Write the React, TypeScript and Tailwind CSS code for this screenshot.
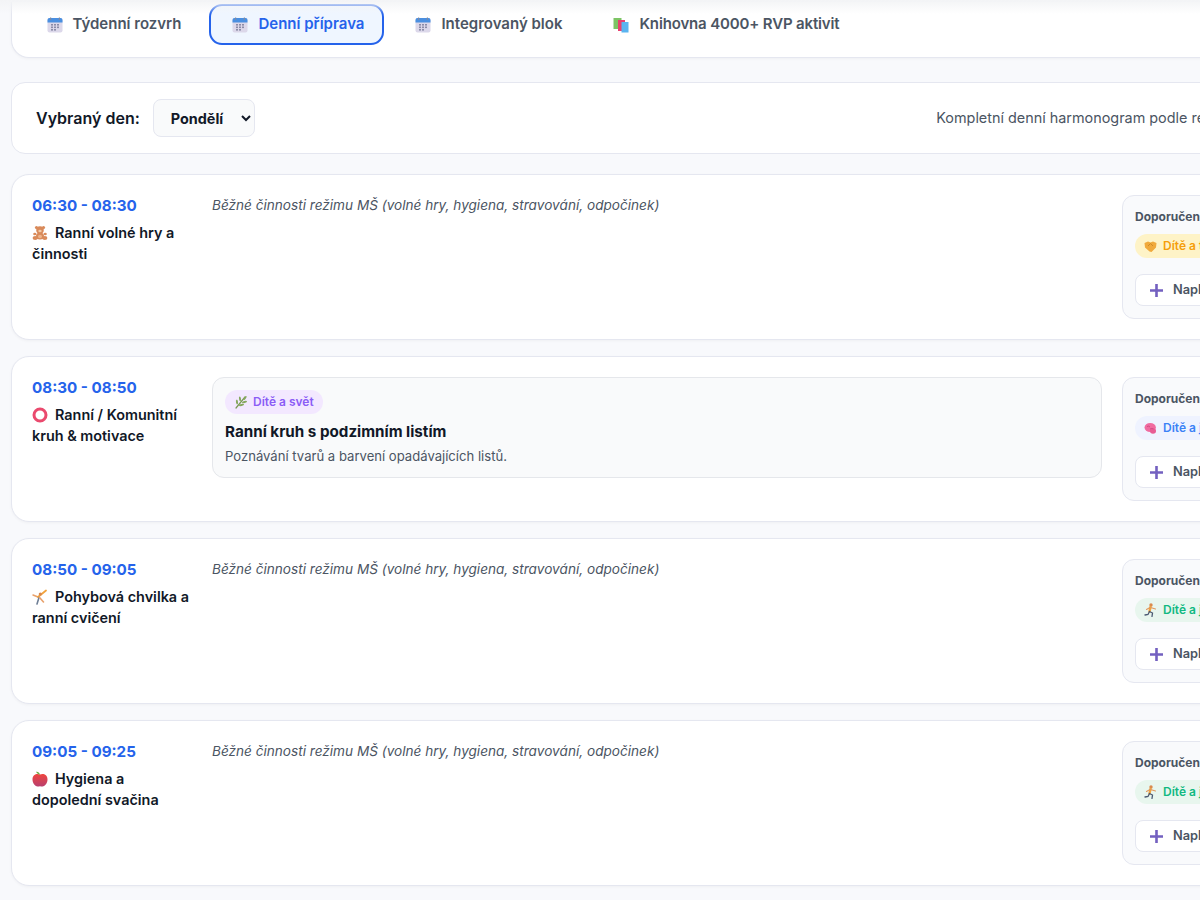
const CalendarIcon = () => (
  <svg width="16" height="16" viewBox="0 0 16 16" className="shrink-0">
    <rect x="0.5" y="1" width="15" height="14.5" rx="2" fill="#dcd8ea" />
    <path d="M.5 3a2 2 0 0 1 2-2h11a2 2 0 0 1 2 2v2.5H.5z" fill="#4a8fe0" />
    <rect x="3" y="0.5" width="1.2" height="2.5" fill="#7c8aa5" />
    <rect x="11.8" y="0.5" width="1.2" height="2.5" fill="#7c8aa5" />
    <g fill="#8b8ca8">
      <rect x="4" y="7" width="2" height="1.6" />
      <rect x="7" y="7" width="2" height="1.6" />
      <rect x="10" y="7" width="2" height="1.6" />
      <rect x="4" y="9.5" width="2" height="1.6" />
      <rect x="7" y="9.5" width="2" height="1.6" />
      <rect x="10" y="9.5" width="2" height="1.6" />
      <rect x="4" y="12" width="2" height="1.6" />
      <rect x="7" y="12" width="2" height="1.6" />
    </g>
  </svg>
);

const BooksIcon = () => (
  <svg width="16" height="16" viewBox="0 0 16 16" className="shrink-0">
    <rect x="0.5" y="1" width="8" height="11" fill="#7cc464" />
    <rect x="5" y="3" width="7" height="11" fill="#e8416f" />
    <rect x="8.5" y="5" width="7" height="10.5" fill="#5ab4f0" />
  </svg>
);

const TeddyIcon = () => (
  <svg width="16" height="16" viewBox="0 0 16 16" className="shrink-0">
    <g fill="#d98a5a">
      <circle cx="4.5" cy="2.5" r="1.6" />
      <circle cx="11.5" cy="2.5" r="1.6" />
      <circle cx="8" cy="5" r="3.8" />
      <ellipse cx="8" cy="11" rx="4" ry="3.6" />
      <ellipse cx="3.2" cy="13" rx="2.6" ry="2" />
      <ellipse cx="12.8" cy="13" rx="2.6" ry="2" />
      <ellipse cx="2.8" cy="9" rx="1.6" ry="1.3" />
      <ellipse cx="13.2" cy="9" rx="1.6" ry="1.3" />
    </g>
    <ellipse cx="8" cy="6" rx="1.7" ry="1.2" fill="#f2c9a4" />
    <ellipse cx="8" cy="11.5" rx="2" ry="1.8" fill="#eeb48a" />
  </svg>
);

const RingIcon = () => (
  <svg width="16" height="16" viewBox="0 0 16 16" className="shrink-0">
    <circle cx="8" cy="8" r="6" fill="none" stroke="#ea4a6e" strokeWidth="3" />
  </svg>
);

const CartwheelIcon = () => (
  <svg width="16" height="16" viewBox="0 0 16 16" className="shrink-0">
    <path d="M1 6 6 8" stroke="#e8a06a" strokeWidth="1.5" strokeLinecap="round" />
    <path d="M6 8 14 1.5" stroke="#f2a33c" strokeWidth="1.8" strokeLinecap="round" />
    <path d="M7 8.5 5 15" stroke="#6f7f96" strokeWidth="1.6" strokeLinecap="round" />
    <path d="M7.5 8.5 11.5 13" stroke="#e8a06a" strokeWidth="1.6" strokeLinecap="round" />
    <circle cx="8.3" cy="5" r="1.6" fill="#d9874f" />
  </svg>
);

const AppleIcon = () => (
  <svg width="16" height="16" viewBox="0 0 16 16" className="shrink-0">
    <defs>
      <linearGradient id="appleFill" x1="0" y1="0" x2="0" y2="1">
        <stop offset="0" stopColor="#f0453e" />
        <stop offset="1" stopColor="#b8406f" />
      </linearGradient>
    </defs>
    <path d="M8 3.5C10.500 2.300 15.500 2.800 15.500 8.500 15.500 12.500 12.500 15.500 10.500 15.500 9.500 15.500 8.800 15.200 8 15.200 7.200 15.200 6.500 15.500 5.500 15.500 3.500 15.500.5 12.500.5 8.500.5 2.800 5.500 2.300 8 3.500z" fill="url(#appleFill)" />
    <path d="M8 3.800C6.500 3.500 5 2.500 4 .8 6 .3 7.800 1.800 8 3.800z" fill="#6aa83f" />
  </svg>
);

const HerbIcon = () => (
  <svg width="14" height="14" viewBox="0 0 14 14" className="shrink-0">
    <path d="M2 13 11 2" stroke="#7a9a55" strokeWidth="1.200" strokeLinecap="round" />
    <g fill="#86a85e">
      <ellipse cx="11" cy="3" rx="1" ry="2.400" transform="rotate(35 11 3)" />
      <ellipse cx="10.500" cy="7" rx="2.600" ry="1" transform="rotate(-15 10.500 7)" />
      <ellipse cx="6" cy="3.800" rx="1" ry="2.400" transform="rotate(-10 6 3.800)" />
      <ellipse cx="7.500" cy="10" rx="2.600" ry="1" transform="rotate(-10 7.500 10)" />
      <ellipse cx="3" cy="7" rx="1" ry="2.400" transform="rotate(-10 3 7)" />
    </g>
  </svg>
);

const HandshakeIcon = () => (
  <svg width="13" height="13" viewBox="0 0 13 13" className="shrink-0">
    <path d="M0.500 3 4 1.500 6.500 2.500 9 1.500 12.500 3 12 7.500 7.500 12 5.500 11.500 1 7.500z" fill="#f0a93c" />
    <path d="M4 6 6.500 3.500 9 6" fill="none" stroke="#d08a25" strokeWidth="1" />
  </svg>
);

const BrainIcon = () => (
  <svg width="13" height="13" viewBox="0 0 13 13" className="shrink-0">
    <ellipse cx="6.200" cy="5.500" rx="5.700" ry="4.500" fill="#f06ba0" />
    <ellipse cx="9" cy="9" rx="3" ry="2.800" fill="#e85c94" />
    <path d="M3 4.500q2-1 3 .5M6 7q2-1 3.500 0" fill="none" stroke="#c9457d" strokeWidth="0.800" />
  </svg>
);

const RunnerIcon = () => (
  <svg width="13" height="14" viewBox="0 0 13 14" className="shrink-0">
    <circle cx="7" cy="2" r="1.700" fill="#d98a4f" />
    <path d="M6.500 4 5.500 8.500" stroke="#f2a33c" strokeWidth="2.400" strokeLinecap="round" />
    <path d="M6.500 4.500 11.500 6M6 4.500 2.500 6.500" stroke="#e0995e" strokeWidth="1.100" strokeLinecap="round" />
    <path d="M5.500 8.500 8.500 10 8 13.500" fill="none" stroke="#4b5a72" strokeWidth="1.300" strokeLinecap="round" />
    <path d="M5.500 8.500 4 11.500 1 12" fill="none" stroke="#4b5a72" strokeWidth="1.300" strokeLinecap="round" />
  </svg>
);

const PlusIcon = () => (
  <svg width="13" height="13" viewBox="0 0 13 13" className="mt-px shrink-0">
    <path d="M6.500 0v13M0 6.500h13" stroke="#7360c0" strokeWidth="2.600" />
  </svg>
);

type Area = "social" | "mind" | "body";

const areaChips = {
  social: { cls: "bg-[#fef3c7] text-[#f59e0b]", icon: <HandshakeIcon />, label: "Dítě a ten druhý" },
  mind: { cls: "bg-[#eff3ff] text-[#3b82f6]", icon: <BrainIcon />, label: "Dítě a jeho psychika" },
  body: { cls: "bg-[#e8f6ee] text-[#10b981]", icon: <RunnerIcon />, label: "Dítě a jeho tělo" },
};

type Slot = {
  time: string;
  icon: React.ReactNode;
  name: string;
  area: Area;
  activity?: boolean;
};

const slots: Slot[] = [
  { time: "06:30 - 08:30", icon: <TeddyIcon />, name: "Ranní volné hry a činnosti", area: "social" },
  { time: "08:30 - 08:50", icon: <RingIcon />, name: "Ranní / Komunitní kruh & motivace", area: "mind", activity: true },
  { time: "08:50 - 09:05", icon: <CartwheelIcon />, name: "Pohybová chvilka a ranní cvičení", area: "body" },
  { time: "09:05 - 09:25", icon: <AppleIcon />, name: "Hygiena a dopolední svačina", area: "body" },
];

const tabs = [
  { label: "Týdenní rozvrh", icon: <CalendarIcon /> },
  { label: "Denní příprava", icon: <CalendarIcon />, active: true },
  { label: "Integrovaný blok", icon: <CalendarIcon /> },
  { label: "Knihovna 4000+ RVP aktivit", icon: <BooksIcon />, tight: true },
];

const SlotRow = ({ slot }: { slot: Slot }) => {
  const chip = areaChips[slot.area];
  return (
    <div className="grid h-[166px] grid-cols-[160px_890px_280px] gap-5 rounded-[18px] border border-[#e5e7f0] bg-white p-5 shadow-[0_1px_3px_rgba(0,0,0,0.04)]">
      <div>
        <div className="text-[15.2px] leading-[22px] font-bold text-[#2563eb]">{slot.time}</div>
        <div className="mt-[4.6px] text-[14.4px] leading-[21.6px] font-semibold text-[#111827]">
          <span className="mr-[7px] inline-block align-[-3px]">{slot.icon}</span>
          {slot.name}
        </div>
      </div>
      {slot.activity ? (
        <div className="h-[101px] rounded-xl border border-[#e5e7eb] bg-[#f9fafb] px-3 py-3">
          <span className="inline-flex h-6 items-center gap-[5px] rounded-full bg-[#f3e8ff] px-[9px] text-xs font-semibold text-[#8b5cf6]">
            <HerbIcon />
            Dítě a svět
          </span>
          <h3 className="mt-[6px] text-[15.2px] leading-[21px] font-bold text-[#111827]">Ranní kruh s podzimním listím</h3>
          <p className="mt-[4px] text-[13.1px] leading-5 text-[#4b5563]">Poznávání tvarů a barvení opadávajících listů.</p>
        </div>
      ) : (
        <p className="text-[13.6px] leading-5 text-[#4b5563] italic">
          Běžné činnosti režimu MŠ (volné hry, hygiena, stravování, odpočinek)
        </p>
      )}
      <div className="h-[124px] rounded-xl border border-[#e5e7f0] bg-[#f9fafc] p-3">
        <div className="text-xs leading-[18px] font-bold text-[#4b5563]">Doporučené oblasti RVP</div>
        <span className={`mt-[8px] inline-flex h-6 items-center gap-[6px] rounded-full px-[9px] text-xs font-semibold ${chip.cls}`}>
          {chip.icon}
          {chip.label}
        </span>
        <button className="mt-[15px] flex h-8 w-full items-center gap-[10px] rounded-lg border border-[#e5e7f0] bg-white px-[14px] text-[12.8px] font-semibold text-[#4b5563]">
          <PlusIcon />
          Naplánovat aktivitu
        </button>
      </div>
    </div>
  );
};

export default function App() {
  return (
    <div className="relative h-[900px] w-[1200px] overflow-hidden bg-[#f8f9fc] font-['Inter',sans-serif]">
      <div className="absolute inset-x-0 top-0 z-10 h-[14px] bg-gradient-to-b from-[#f3f4f6] to-transparent" />
      <div className="w-[1420px] px-[11px] pt-[2px]">
        <div className="flex h-[56px] items-center gap-2 rounded-b-[18px] border-x border-b border-[#e5e7f0] bg-white pb-[10px] pl-[11.5px] shadow-[0_1px_3px_rgba(0,0,0,0.04)]">
          {tabs.map((t) => (
            <button
              key={t.label}
              className={`flex h-[41px] items-center gap-[10px] rounded-[13px] border-2 pr-[18px] pl-[21px] text-[15px] font-semibold ${
                t.active ? "border-[#2563eb] bg-[#eff6ff] text-[#2563eb]" : "border-transparent text-[#4b5563]"
              } ${t.tight ? "tracking-[-0.15px]" : ""}`}
            >
              {t.icon}
              {t.label}
            </button>
          ))}
        </div>
        <div className="mt-[24px] flex h-[72px] items-center justify-between rounded-[14px] border border-[#e5e7f0] bg-white px-6">
          <div className="flex items-center gap-[13px]">
            <label className="text-[16px] font-semibold text-[#111827]">Vybraný den:</label>
            <select className="h-[38px] w-[102px] rounded-lg border border-[#e5e7f0] bg-[#f9fafb] pl-[13px] text-[14.4px] font-bold text-[#111827]">
              <option>Pondělí</option>
              <option>Úterý</option>
              <option>Středa</option>
              <option>Čtvrtek</option>
              <option>Pátek</option>
            </select>
          </div>
          <span className="mr-[76px] text-[14.4px] text-[#4b5563]">Kompletní denní harmonogram podle režimu MŠ a RVP</span>
        </div>
        <div className="mt-5 flex flex-col gap-4">
          {slots.map((s) => (
            <SlotRow key={s.time} slot={s} />
          ))}
        </div>
      </div>
    </div>
  );
}
